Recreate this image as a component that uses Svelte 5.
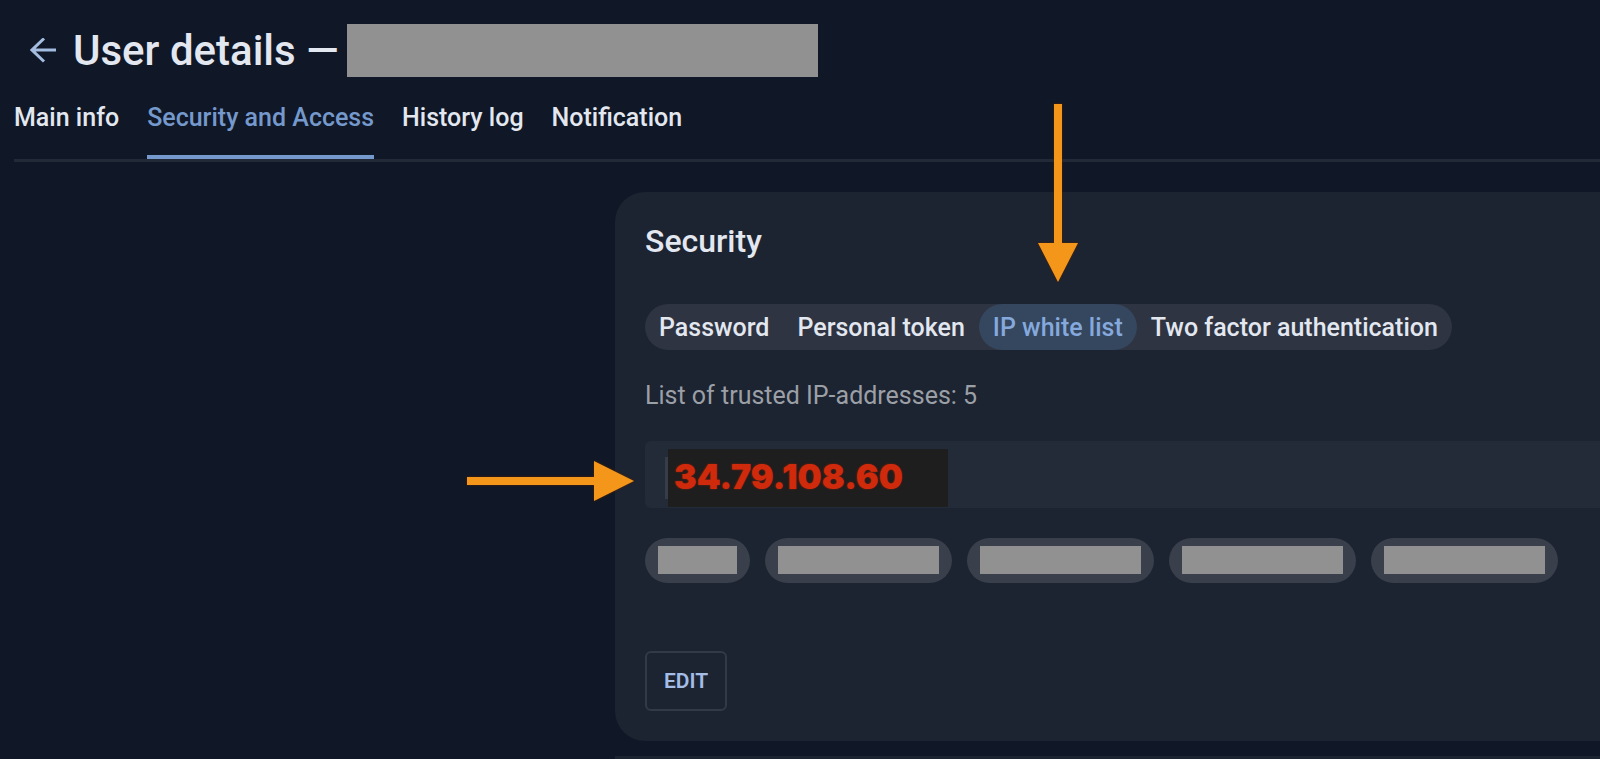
<script>
  const tabs = ['Main info', 'Security and Access', 'History log', 'Notification'];
  const modes = ['Password', 'Personal token', 'IP white list', 'Two factor authentication'];
  const trusted = [79, 161, 161, 161, 161];

  let activeTab = $state('Security and Access');
  let activeMode = $state('IP white list');
</script>

<div class="page">
  <header>
    <button class="back" aria-label="Back">
      <svg viewBox="0 0 26 26" width="26" height="26" aria-hidden="true">
        <path d="M26 12H2M14 0.500 2 12l12 11.500" />
      </svg>
    </button>
    <h1>User details —</h1>
    <span class="mask name"></span>
  </header>

  <nav>
    {#each tabs as tab}
      <a href="#top" class:active={tab === activeTab} onclick={() => (activeTab = tab)}>{tab}</a>
    {/each}
  </nav>

  <main>
    <section class="card">
      <h2>Security</h2>

      <div class="modes">
        {#each modes as mode}
          <div class="mode">
            <button class:active={mode === activeMode} onclick={() => (activeMode = mode)}>{mode}</button>
            {#if mode === 'IP white list'}
              <svg class="arrow down" viewBox="0 0 40 178" width="40" height="178" aria-hidden="true">
                <path d="M16 0h8v139h16L20 178 0 139h16z" />
              </svg>
            {/if}
          </div>
        {/each}
      </div>

      <p class="count">List of trusted IP-addresses: 5</p>

      <div class="field">
        <span class="divider"></span>
        <span class="address">34.79.108.60</span>
        <svg class="arrow right" viewBox="0 0 167 40" width="167" height="40" aria-hidden="true">
          <path d="M0 16h127V0l40 20-40 20V24H0z" />
        </svg>
      </div>

      <ul class="chips">
        {#each trusted as width}
          <li><span class="mask" style="width: {width}px"></span></li>
        {/each}
      </ul>

      <button class="edit">EDIT</button>
    </section>
    <section class="card next"></section>
  </main>
</div>

<style>
  :global(body) {
    background: #101726;
  }

  .page {
    display: flex;
    flex-direction: column;
    box-sizing: border-box;
    min-height: 100vh;
    padding-top: 24px;
    overflow: hidden;
    color: #e3e7f0;
    font-family: Roboto, sans-serif;
    font-size: 25px;
    line-height: 30px;
  }

  button {
    padding: 0;
    border: 0;
    background: none;
    color: inherit;
    font: inherit;
    cursor: pointer;
  }

  h1,
  h2,
  p,
  ul {
    margin: 0;
    padding: 0;
  }

  .mask {
    display: block;
    height: 28px;
    background: #919191;
  }

  header {
    display: flex;
    align-items: center;
    padding-left: 30px;
  }

  .back {
    display: flex;
    margin-right: 17px;
  }

  .back svg {
    fill: none;
    stroke: #a3bce0;
    stroke-width: 3;
  }

  h1 {
    margin-right: 8px;
    font-size: 42px;
    font-weight: 500;
    line-height: 53px;
  }

  .name {
    width: 471px;
    height: 53px;
  }

  nav {
    display: flex;
    gap: 28px;
    margin: 26px 0 30px 14px;
    border-bottom: 3px solid #222937;
  }

  nav a {
    padding-bottom: 22px;
    border-bottom: 4px solid transparent;
    color: inherit;
    font-weight: 500;
    text-decoration: none;
  }

  nav a.active {
    border-color: #7599cc;
    color: #7599cc;
  }

  main {
    display: flex;
    flex: 1;
    flex-direction: column;
    gap: 15px;
    margin-left: 615px;
  }

  .card {
    padding: 29px 0 30px 30px;
    border-radius: 30px 0 0 30px;
    background: #1c2331;
  }

  .card.next {
    flex: 1;
    padding: 0;
    border-radius: 0;
  }

  h2 {
    margin-bottom: 43px;
    font-size: 32px;
    font-weight: 500;
    line-height: 40px;
  }

  .modes {
    display: flex;
    width: fit-content;
    border-radius: 23px;
    background: #2e3441;
  }

  .mode {
    position: relative;
  }

  .mode button {
    padding: 9px 14px 7px;
    border-radius: 23px;
    font-weight: 500;
  }

  .mode button.active {
    background: #35465f;
    color: #85a9dc;
  }

  .count {
    margin: 31px 0 30px;
    color: #9b9fa6;
  }

  .arrow {
    position: absolute;
    fill: #f39619;
    filter: drop-shadow(0 0 1px #5a2200);
    pointer-events: none;
  }

  .arrow.down {
    bottom: 68px;
    left: calc(50% - 20px);
  }

  .arrow.right {
    top: 20px;
    right: calc(100% + 11px);
  }

  .field {
    position: relative;
    display: flex;
    align-items: center;
    padding: 8px 0 1px 20px;
    border-radius: 6px 0 0 6px;
    background: #242b38;
  }

  .divider {
    width: 3px;
    height: 42px;
    background: #363c4a;
  }

  .address {
    box-sizing: border-box;
    width: 280px;
    padding: 0 6px 2px;
    background: #1e1e1e;
    color: #cf2a0c;
    font-family: Inter, sans-serif;
    font-size: 34px;
    font-weight: 900;
    line-height: 56px;
    text-shadow: 0 0 2px #8a1f0a;
  }

  .chips {
    display: flex;
    gap: 15px;
    margin: 30px 0 68px;
    list-style: none;
  }

  .chips li {
    padding: 8px 13px 9px;
    border-radius: 23px;
    background: #3a3f4c;
  }

  .edit {
    padding: 13px 17px;
    border: 2px solid #323947;
    border-radius: 6px;
    color: #a3bde6;
    font-size: 21px;
    font-weight: 600;
  }
</style>
